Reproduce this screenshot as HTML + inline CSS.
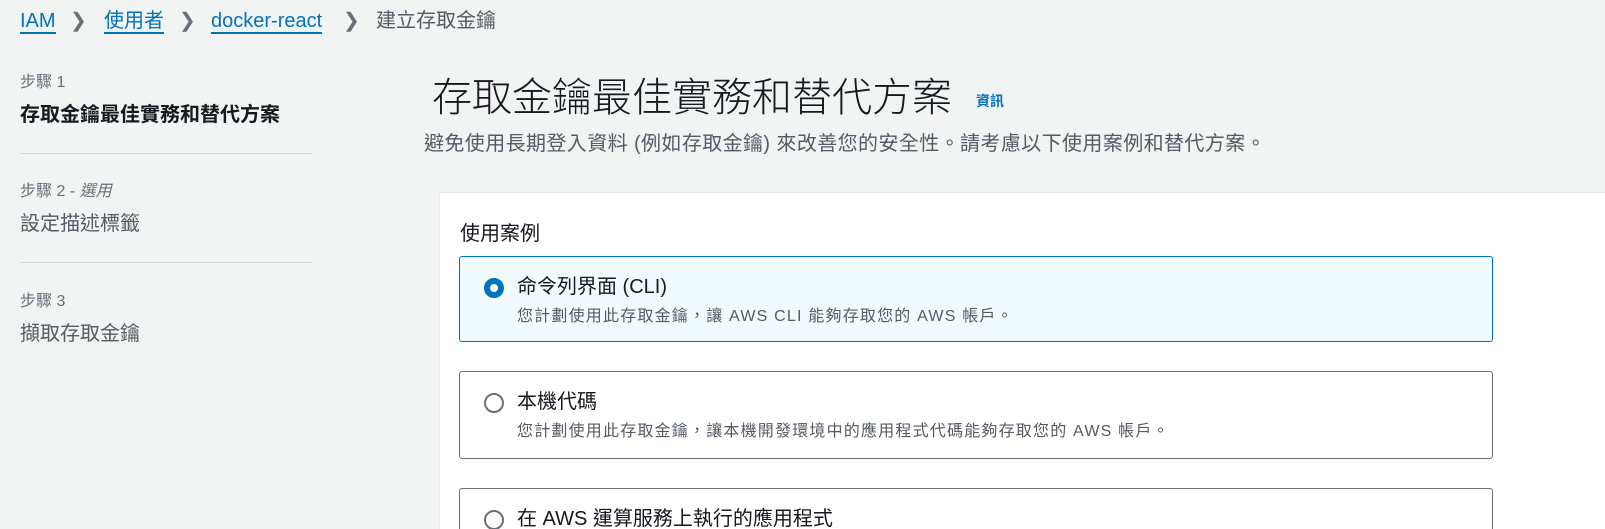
<!DOCTYPE html>
<html><head><meta charset="utf-8"><style>
*{margin:0;padding:0;box-sizing:border-box}
html,body{width:1605px;height:529px;overflow:hidden}
body{background:#f2f3f3;font-family:"Liberation Sans","Noto Sans CJK TC",sans-serif;color:#16191f;position:relative}
.a{position:absolute;white-space:nowrap}
.bc{top:7px;font-size:20px;line-height:28px}
.bc a{color:#0073bb;text-decoration:none;border-bottom:2px solid #0073bb}
.chev{color:#687078}
.step{font-size:16px;color:#687078}
.sep{position:absolute;left:20px;width:292px;height:1px;background:#d5dbdb}
.panel{position:absolute;left:439px;top:192px;width:1166px;height:337px;background:#fff;border-left:1px solid #e9ebed;border-top:1px solid #e9ebed}
.card{position:absolute;left:459px;width:1034px;border:1px solid #687078;border-radius:3px;background:#fff;overflow:hidden}
.card.sel{background:#f1faff;border-color:#0073bb}
.r{position:absolute;left:24px;top:21px;width:20px;height:20px;border-radius:50%;border:2px solid #687078;background:#fff}
.sel .r{border:6px solid #0073bb}
.t{position:absolute;left:57px;top:13px;font-size:20px;white-space:nowrap}
.d{position:absolute;left:57px;top:45px;font-size:16px;letter-spacing:1.2px;color:#545b64;white-space:nowrap}
</style></head><body>
<div class="a bc" style="left:20px"><a>IAM</a></div>
<div class="a bc chev" style="left:70px">&#x276F;</div>
<div class="a bc" style="left:104px"><a>使用者</a></div>
<div class="a bc chev" style="left:179px">&#x276F;</div>
<div class="a bc" style="left:211px"><a>docker-react</a></div>
<div class="a bc chev" style="left:343px">&#x276F;</div>
<div class="a bc" style="left:376px;color:#545b64">建立存取金鑰</div>

<div class="a step" style="left:20px;top:68px">步驟 1</div>
<div class="a" style="left:20px;top:98px;font-size:20px;font-weight:bold">存取金鑰最佳實務和替代方案</div>
<div class="sep" style="top:153px"></div>
<div class="a step" style="left:20px;top:177px">步驟 2 - <i>選用</i></div>
<div class="a" style="left:20px;top:207px;font-size:20px;color:#545b64">設定描述標籤</div>
<div class="sep" style="top:262px"></div>
<div class="a step" style="left:20px;top:287px">步驟 3</div>
<div class="a" style="left:20px;top:317px;font-size:20px;color:#545b64">擷取存取金鑰</div>

<div class="a" style="left:432px;top:65px;font-size:40px;font-weight:300">存取金鑰最佳實務和替代方案</div>
<div class="a" style="left:976px;top:91px;font-size:14px;font-weight:bold;color:#0073bb">資訊</div>
<div class="a" style="left:424px;top:127px;font-size:20px;letter-spacing:0.4px;color:#545b64">避免使用長期登入資料 (例如存取金鑰) 來改善您的安全性。請考慮以下使用案例和替代方案。</div>

<div class="panel"></div>
<div class="a" style="left:460px;top:217px;font-size:20px">使用案例</div>
<div class="card sel" style="top:256px;height:86px"><div class="r"></div><div class="t">命令列界面 (CLI)</div><div class="d">您計劃使用此存取金鑰，讓 AWS CLI 能夠存取您的 AWS 帳戶。</div></div>
<div class="card" style="top:371px;height:88px"><div class="r"></div><div class="t">本機代碼</div><div class="d">您計劃使用此存取金鑰，讓本機開發環境中的應用程式代碼能夠存取您的 AWS 帳戶。</div></div>
<div class="card" style="top:488px;height:60px"><div class="r"></div><div class="t">在 AWS 運算服務上執行的應用程式</div></div>
</body></html>
